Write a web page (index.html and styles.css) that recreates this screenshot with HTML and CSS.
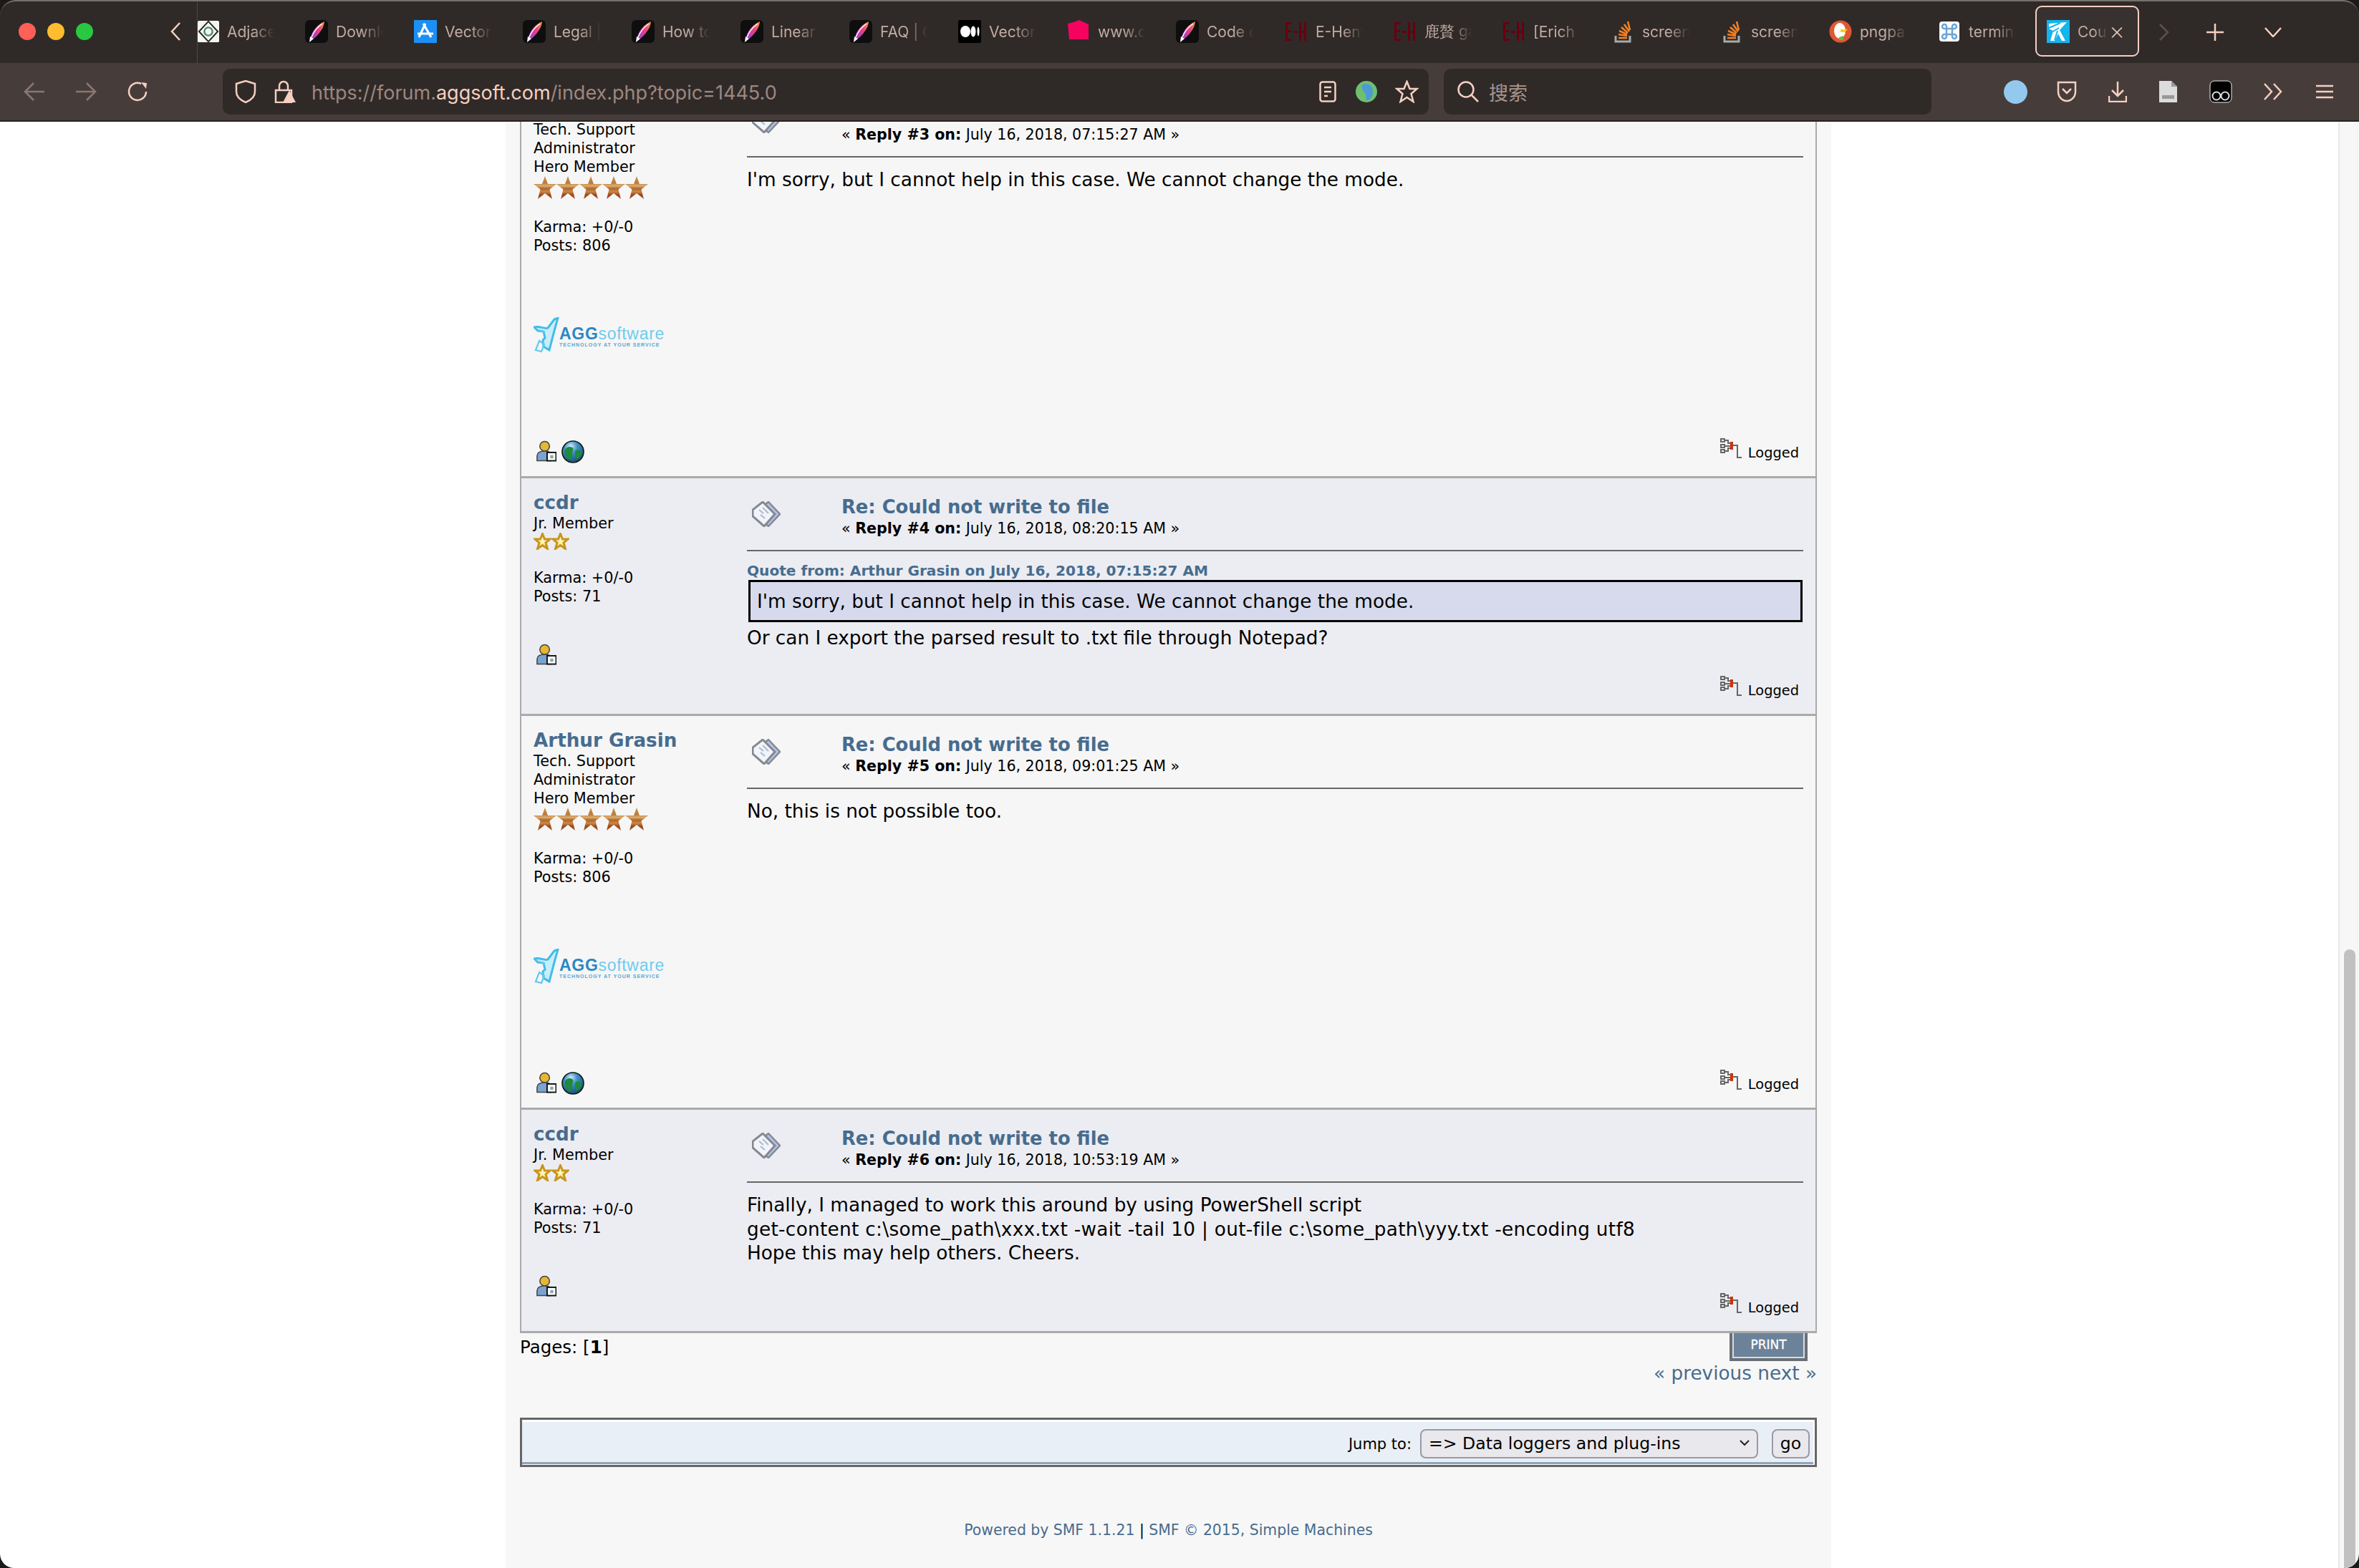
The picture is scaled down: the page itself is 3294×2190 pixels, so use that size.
FILE: index.html
```html
<!DOCTYPE html>
<html>
<head>
    <title>Could not write to file</title>
    <link rel="stylesheet" href="styles.css">
</head>
<body>

    <svg class="sprite" width="0" height="0" aria-hidden="true">
        <defs>
            <linearGradient id="bronze" x1="0" y1="0" x2="0" y2="1">
                <stop offset="0" stop-color="#bf9658"/>
                <stop offset="0.3" stop-color="#bd7a38"/>
                <stop offset="0.42" stop-color="#dcae72"/>
                <stop offset="0.55" stop-color="#b0662a"/>
                <stop offset="0.68" stop-color="#c9894a"/>
                <stop offset="0.82" stop-color="#9a4716"/>
                <stop offset="1" stop-color="#ad5432"/>
            </linearGradient>
            <linearGradient id="gold" x1="0" y1="0" x2="0" y2="1">
                <stop offset="0" stop-color="#fff8d0"/>
                <stop offset="0.6" stop-color="#fff3b0"/>
                <stop offset="1" stop-color="#f6d265"/>
            </linearGradient>
            <linearGradient id="quill" x1="1" y1="0" x2="0" y2="1">
                <stop offset="0" stop-color="#f0a13a"/>
                <stop offset="0.45" stop-color="#e8407e"/>
                <stop offset="1" stop-color="#9b3fe0"/>
            </linearGradient>
            <radialGradient id="earth" cx="0.4" cy="0.25" r="0.85">
                <stop offset="0" stop-color="#d7eef7"/>
                <stop offset="0.35" stop-color="#3f93c8"/>
                <stop offset="1" stop-color="#123f6a"/>
            </radialGradient>
            <symbol id="star-bronze" viewBox="0 0 32 32">
                <path d="M16 0l4 11h12l-9.500 7.500L26 32l-10-8-10 8 3.500-13.500L0 11h12z" fill="url(#bronze)"/>
            </symbol>
            <symbol id="star-gold" viewBox="0 0 24 24">
                <path d="M12 1.500l3 7.500h7.500l-6 5 2.500 8.500-7-5-7 5 2.500-8.500-6-5H9z" fill="url(#gold)" stroke="#c8951c" stroke-width="3"/>
            </symbol>
            <symbol id="post-icon" viewBox="0 0 40 36">
                <path d="M23 1l16 17-16 17-5-4 11-13-11-13z" fill="#b4c2ee" stroke="#85898f" stroke-width="2.500"/>
                <path d="M15 1l17 17-15 17L1 21V12z" fill="#f1f4fa" stroke="#85898f" stroke-width="3"/>
                <path d="M10 12l6 5M15 9l8 8M12 19l6 5" stroke="#aeb8c6" stroke-width="2"/>
            </symbol>
            <symbol id="profile-icon" viewBox="0 0 30 30">
                <circle cx="13" cy="8" r="7" fill="#e5b733" stroke="#444" stroke-width="1.600"/>
                <path d="M2 29v-7c0-5 4-7 11-7s9 2 9 7v7z" fill="#7aa3d0" stroke="#444" stroke-width="1.600"/>
                <rect x="16.500" y="17" width="13" height="12" fill="#fff" stroke="#111" stroke-width="2"/>
                <rect x="21" y="21" width="4.500" height="4.500" fill="#8aa"/>
            </symbol>
            <symbol id="globe-icon" viewBox="0 0 32 32">
                <circle cx="16" cy="16" r="15" fill="url(#earth)" stroke="#0c1a14" stroke-width="1.600"/>
                <path d="M5 13c3-5 9-5 11-2s-2 5-1 8-1 9-4 8-8-10-6-14zM20 14c3-1 8 0 8 3s-3 8-6 9-4-10-2-12z" fill="#1f8a3a"/>
            </symbol>
            <symbol id="logged-icon" viewBox="0 0 30 30">
                <g fill="none" stroke="#666" stroke-width="2">
                    <rect x="1" y="1" width="5" height="4"/>
                    <rect x="1" y="9" width="5" height="4"/>
                    <rect x="1" y="16" width="5" height="4"/>
                    <path d="M6 3h5v4h4M6 11h9M6 18h5v-4h4M17 10h7v17h6"/>
                </g>
                <rect x="14" y="5" width="4" height="11" fill="#cc3311"/>
            </symbol>
            <symbol id="plane" viewBox="0 0 38 50">
                <path d="M1 14c8-2 15 3 19 1l9-12 5-2-5 18-7 27-8-5-1-9 3-3-2-9-8-1z" fill="#c8eefb" stroke="#42bdea" stroke-width="3"/>
                <path d="M8 33l7 5-4 10-8-2zM7 18l9 3" fill="none" stroke="#62c9ef" stroke-width="2.200"/>
            </symbol>
            <symbol id="fav-pen" viewBox="0 0 32 32">
                <rect width="32" height="32" rx="6" fill="#0e0e0e"/>
                <path d="M27 2C18 6 10 14 8 24l4 2C19 20 26 12 27 2z" fill="url(#quill)"/>
                <path d="M24 5C17 10 12 16 9 24" stroke="#fff" stroke-width="1.500" fill="none"/>
                <path d="M7 23l5 3-6 5z" fill="#fff"/>
            </symbol>
            <symbol id="fav-eh" viewBox="0 0 32 32">
                <path d="M1 3h9v3H4v8h5v3H4v9h6v3H1zM20 3h3v12h4V3h3v26h-3V18h-4v11h-3zM12 15h6v3h-6z" fill="#660011"/>
            </symbol>
            <symbol id="fav-so" viewBox="0 0 24 32">
                <path d="M2 22v8h20v-8" fill="none" stroke="#a7a9ac" stroke-width="3"/>
                <path d="M6 25h12M6 20l12 2M7 15l11 5M10 10l9 8M14 6l7 10M19 2l3 12" stroke="#f48024" stroke-width="2.600" fill="none"/>
            </symbol>
            <symbol id="fav-agg" viewBox="0 0 32 32">
                <rect width="32" height="32" fill="#14b4ee"/>
                <path d="M3 5l25-2-10 11 8 15h-5l-5-10-5 10H5l4-14-6-3z" fill="#fff"/>
                <path d="M3 11l16-7M11 28l4-13M7 17l10-6" stroke="#14b4ee" stroke-width="2"/>
            </symbol>
        </defs>
    </svg>

    <div class="window">
        <header class="chrome">
            <div class="tabbar">
                <div class="lights">
                    <span class="light red"></span>
                    <span class="light yellow"></span>
                    <span class="light green"></span>
                </div>
                <svg class="tab-scroll" width="16" height="26" viewBox="0 0 16 26"><path d="M14 1L3 13l11 12" class="stroke"/></svg>
                <div class="tabs">
                    <div class="tab">
                        <svg class="fav" viewBox="0 0 32 32"><rect width="32" height="32" rx="2" fill="#f4f4f4"/><path d="M16 1l14 15-14 15L2 16z" fill="none" stroke="#222" stroke-width="2"/><circle cx="16" cy="16" r="6" fill="none" stroke="#4a8a5a" stroke-width="2.500"/></svg>
                        <span class="tab-title">Adjacency</span>
                    </div>
                    <div class="tab"><svg class="fav"><use href="#fav-pen"/></svg><span class="tab-title">Download</span></div>
                    <div class="tab">
                        <svg class="fav" viewBox="0 0 32 32"><rect width="32" height="32" fill="#1c8ff5"/><path d="M16 5L7 24M13 5l11 19M5 19h22" stroke="#fff" stroke-width="3" fill="none"/></svg>
                        <span class="tab-title">Vector</span>
                    </div>
                    <div class="tab"><svg class="fav"><use href="#fav-pen"/></svg><span class="tab-title">Legal | Affinity</span></div>
                    <div class="tab"><svg class="fav"><use href="#fav-pen"/></svg><span class="tab-title">How to use</span></div>
                    <div class="tab"><svg class="fav"><use href="#fav-pen"/></svg><span class="tab-title">Linear</span></div>
                    <div class="tab"><svg class="fav"><use href="#fav-pen"/></svg><span class="tab-title">FAQ | Code</span></div>
                    <div class="tab">
                        <svg class="fav" viewBox="0 0 32 32"><rect width="32" height="32" rx="2" fill="#000"/><ellipse cx="10" cy="16" rx="7" ry="8" fill="#fff"/><ellipse cx="21" cy="16" rx="3.500" ry="7.500" fill="#fff"/><ellipse cx="28" cy="16" rx="1.500" ry="6.500" fill="#fff"/></svg>
                        <span class="tab-title">Vector</span>
                    </div>
                    <div class="tab">
                        <svg class="fav" viewBox="0 0 32 32"><path d="M1 5l8-2 8-3 13 6v21L3 27z" fill="#f5035f"/></svg>
                        <span class="tab-title">www.dribbble</span>
                    </div>
                    <div class="tab"><svg class="fav"><use href="#fav-pen"/></svg><span class="tab-title">Code of</span></div>
                    <div class="tab"><svg class="fav"><use href="#fav-eh"/></svg><span class="tab-title">E-Hentai</span></div>
                    <div class="tab"><svg class="fav"><use href="#fav-eh"/></svg><span class="tab-title">鹿贅 gallery</span></div>
                    <div class="tab"><svg class="fav"><use href="#fav-eh"/></svg><span class="tab-title">[Erich Kästner</span></div>
                    <div class="tab"><svg class="fav"><use href="#fav-so"/></svg><span class="tab-title">screen</span></div>
                    <div class="tab"><svg class="fav"><use href="#fav-so"/></svg><span class="tab-title">screen</span></div>
                    <div class="tab">
                        <svg class="fav" viewBox="0 0 32 32"><circle cx="16" cy="16" r="15.500" fill="#de5833"/><ellipse cx="15" cy="15" rx="8" ry="11" fill="#fff"/><path d="M16 13h10l-4 4h-6z" fill="#fdd20a"/><path d="M14 24l6-2v6h-6z" fill="#65bc46"/></svg>
                        <span class="tab-title">pngpaste</span>
                    </div>
                    <div class="tab">
                        <svg class="fav" viewBox="0 0 32 32"><rect x="2" y="2" width="28" height="28" rx="4" fill="#fff"/><path d="M12 12h8v8h-8zM12 12V9a3 3 0 1 0-3 3zM20 12V9a3 3 0 1 1 3 3zM12 20v3a3 3 0 1 1-3-3zM20 20v3a3 3 0 1 0 3-3z" fill="none" stroke="#6aa5d8" stroke-width="2.500"/></svg>
                        <span class="tab-title">terminal</span>
                    </div>
                    <div class="tab active"><svg class="fav"><use href="#fav-agg"/></svg><span class="tab-title">Could</span><span class="tab-close">×</span></div>
                </div>
                <div class="tab-tools">
                    <svg width="14" height="24" viewBox="0 0 14 24"><path d="M1 1l11 11L1 23" stroke="#5a4f4b" class="plain"/></svg>
                    <svg width="24" height="24" viewBox="0 0 24 24"><path d="M12 0v24M0 12h24" class="stroke"/></svg>
                    <svg width="24" height="14" viewBox="0 0 24 14"><path d="M1 1l11 12L23 1" class="stroke"/></svg>
                </div>
            </div>
            <div class="toolbar">
                <div class="nav">
                    <svg width="30" height="26" viewBox="0 0 30 26"><path d="M14 1L2 13l12 12M2 13h27" class="stroke dim"/></svg>
                    <svg width="30" height="26" viewBox="0 0 30 26"><path d="M16 1l12 12-12 12M28 13H1" class="stroke dim"/></svg>
                    <svg width="30" height="28" viewBox="0 0 30 28"><path d="M27 14A12 12 0 1 1 20 3" class="stroke"/><path d="M20 1l8 1-1 8z" fill="#f5cfc0"/></svg>
                </div>
                <div class="urlbar">
                    <svg width="30" height="32" viewBox="0 0 30 32"><path d="M15 1l13 4v11c0 8-6 12-13 15C8 28 2 24 2 16V5z" class="stroke"/></svg>
                    <svg width="31" height="32" viewBox="0 0 31 32"><path d="M8 14V8a6 6 0 0 1 12 0v6M3 14h22v17H3z" class="stroke"/><path d="M22 14l9 17H13z" fill="#f5cfc0"/></svg>
                    <span class="url">https://forum.<b>aggsoft.com</b>/index.php?topic=1445.0</span>
                    <div class="url-tools">
                        <svg width="24" height="30" viewBox="0 0 24 30"><rect x="1.500" y="1.500" width="21" height="27" rx="3" class="stroke"/><path d="M7 9h10M7 15h10M7 21h5" class="stroke"/></svg>
                        <svg width="30" height="32" viewBox="0 0 30 32"><circle cx="15" cy="16" r="15" fill="#6fbf6f"/><path d="M10 6c8-3 14 2 14 10s-5 12-8 12 0-7-3-10-6-9-3-12z" fill="#4d9ad6"/></svg>
                        <svg width="33" height="32" viewBox="0 0 33 32"><path d="M16.500 2l4 10h10l-8 7 3 11-9-6-9 6 3-11-8-7h10z" class="stroke"/></svg>
                    </div>
                </div>
                <div class="searchbar">
                    <svg width="30" height="30" viewBox="0 0 30 30"><circle cx="12" cy="12" r="10.500" class="stroke"/><path d="M20 20l9 9" class="stroke"/></svg>
                    <span class="search-text">搜索</span>
                </div>
                <div class="tools">
                    <span class="blue-dot"></span>
                    <svg width="28" height="30" viewBox="0 0 28 30"><path d="M2 2h24v13a12 13 0 0 1-24 0z" class="stroke"/><path d="M8 11l6 6 6-6" class="stroke"/></svg>
                    <svg width="26" height="30" viewBox="0 0 26 30"><path d="M13 1v19M5 13l8 8 8-8M1 21v8h24v-8" class="stroke"/></svg>
                    <svg width="27" height="32" viewBox="0 0 27 32"><path d="M1 1h17l8 8v22H1z" fill="#dcdcdc"/><path d="M18 1v8h8z" fill="#999"/><rect x="5" y="21" width="17" height="5" fill="#999"/></svg>
                    <svg width="32" height="32" viewBox="0 0 32 32"><rect x="1" y="1" width="30" height="30" rx="6" fill="#000" stroke="#eee"/><circle cx="10" cy="22" r="5.500" fill="none" stroke="#ddd" stroke-width="2"/><circle cx="22" cy="22" r="5.500" fill="none" stroke="#ddd" stroke-width="2"/></svg>
                    <svg width="26" height="24" viewBox="0 0 26 24"><path d="M1 1l10 11L1 23M14 1l10 11-10 11" class="stroke"/></svg>
                    <svg width="24" height="20" viewBox="0 0 24 20"><path d="M0 2h24M0 10h24M0 18h24" class="stroke"/></svg>
                </div>
            </div>
        </header>

        <div class="viewport">
            <main class="forum">
                <div class="posts">

                    <article class="post odd first">
                        <div class="poster">
                            <div class="role">Tech. Support</div>
                            <div class="role">Administrator</div>
                            <div class="role">Hero Member</div>
                            <div class="stars"><svg class="star"><use href="#star-bronze"/></svg><svg class="star"><use href="#star-bronze"/></svg><svg class="star"><use href="#star-bronze"/></svg><svg class="star"><use href="#star-bronze"/></svg><svg class="star"><use href="#star-bronze"/></svg></div>
                            <div class="stats">Karma: +0/-0<br>Posts: 806</div>
                            <div class="logo"><svg class="plane"><use href="#plane"/></svg><div class="logo-text"><div class="logo-name"><b>AGG</b>software</div><div class="logo-tag">TECHNOLOGY AT YOUR SERVICE</div></div></div>
                            <div class="links admin"><svg class="profile"><use href="#profile-icon"/></svg><svg class="globe"><use href="#globe-icon"/></svg></div>
                        </div>
                        <div class="content">
                            <div class="head">
                                <svg class="post-icon"><use href="#post-icon"/></svg>
                                <div class="meta">
                                    <h3 class="subject">Re: Could not write to file</h3>
                                    <div class="when">« <b>Reply #3 on:</b> July 16, 2018, 07:15:27 AM »</div>
                                </div>
                            </div>
                            <div class="body">I'm sorry, but I cannot help in this case. We cannot change the mode.</div>
                            <div class="logged"><svg class="logged-icon"><use href="#logged-icon"/></svg>Logged</div>
                        </div>
                    </article>

                    <article class="post even short">
                        <div class="poster">
                            <div class="name">ccdr</div>
                            <div class="role">Jr. Member</div>
                            <div class="stars small"><svg class="star"><use href="#star-gold"/></svg><svg class="star"><use href="#star-gold"/></svg></div>
                            <div class="stats">Karma: +0/-0<br>Posts: 71</div>
                            <div class="links member"><svg class="profile"><use href="#profile-icon"/></svg></div>
                        </div>
                        <div class="content">
                            <div class="head">
                                <svg class="post-icon"><use href="#post-icon"/></svg>
                                <div class="meta">
                                    <h3 class="subject">Re: Could not write to file</h3>
                                    <div class="when">« <b>Reply #4 on:</b> July 16, 2018, 08:20:15 AM »</div>
                                </div>
                            </div>
                            <div class="quote-head">Quote from: Arthur Grasin on July 16, 2018, 07:15:27 AM</div>
                            <div class="quote">I'm sorry, but I cannot help in this case. We cannot change the mode.</div>
                            <div class="body after-quote">Or can I export the parsed result to .txt file through Notepad?</div>
                            <div class="logged"><svg class="logged-icon"><use href="#logged-icon"/></svg>Logged</div>
                        </div>
                    </article>

                    <article class="post odd">
                        <div class="poster">
                            <div class="name">Arthur Grasin</div>
                            <div class="role">Tech. Support</div>
                            <div class="role">Administrator</div>
                            <div class="role">Hero Member</div>
                            <div class="stars"><svg class="star"><use href="#star-bronze"/></svg><svg class="star"><use href="#star-bronze"/></svg><svg class="star"><use href="#star-bronze"/></svg><svg class="star"><use href="#star-bronze"/></svg><svg class="star"><use href="#star-bronze"/></svg></div>
                            <div class="stats">Karma: +0/-0<br>Posts: 806</div>
                            <div class="logo"><svg class="plane"><use href="#plane"/></svg><div class="logo-text"><div class="logo-name"><b>AGG</b>software</div><div class="logo-tag">TECHNOLOGY AT YOUR SERVICE</div></div></div>
                            <div class="links admin"><svg class="profile"><use href="#profile-icon"/></svg><svg class="globe"><use href="#globe-icon"/></svg></div>
                        </div>
                        <div class="content">
                            <div class="head">
                                <svg class="post-icon"><use href="#post-icon"/></svg>
                                <div class="meta">
                                    <h3 class="subject">Re: Could not write to file</h3>
                                    <div class="when">« <b>Reply #5 on:</b> July 16, 2018, 09:01:25 AM »</div>
                                </div>
                            </div>
                            <div class="body">No, this is not possible too.</div>
                            <div class="logged"><svg class="logged-icon"><use href="#logged-icon"/></svg>Logged</div>
                        </div>
                    </article>

                    <article class="post even last">
                        <div class="poster">
                            <div class="name">ccdr</div>
                            <div class="role">Jr. Member</div>
                            <div class="stars small"><svg class="star"><use href="#star-gold"/></svg><svg class="star"><use href="#star-gold"/></svg></div>
                            <div class="stats">Karma: +0/-0<br>Posts: 71</div>
                            <div class="links member"><svg class="profile"><use href="#profile-icon"/></svg></div>
                        </div>
                        <div class="content">
                            <div class="head">
                                <svg class="post-icon"><use href="#post-icon"/></svg>
                                <div class="meta">
                                    <h3 class="subject">Re: Could not write to file</h3>
                                    <div class="when">« <b>Reply #6 on:</b> July 16, 2018, 10:53:19 AM »</div>
                                </div>
                            </div>
                            <div class="body">Finally, I managed to work this around by using PowerShell script<br><span class="code-line">get-content c:\some_path\xxx.txt -wait -tail 10 | out-file c:\some_path\yyy.txt -encoding utf8</span><br>Hope this may help others. Cheers.</div>
                            <div class="logged"><svg class="logged-icon"><use href="#logged-icon"/></svg>Logged</div>
                        </div>
                    </article>

                </div>

                <div class="pager">
                    <div class="pages">Pages: [<b>1</b>]</div>
                    <div class="pager-right">
                        <a class="print">PRINT</a>
                        <div class="prevnext">« previous next »</div>
                    </div>
                </div>

                <div class="jump">
                    <span class="jump-label">Jump to:</span>
                    <div class="select-wrap">
                        <select class="jump-select"><option>=&gt; Data loggers and plug-ins</option></select>
                        <svg class="select-arrow" width="14" height="9" viewBox="0 0 14 9"><path d="M1 1l6 6 6-6" fill="none" stroke="#222" stroke-width="2"/></svg>
                    </div>
                    <button class="go">go</button>
                </div>

                <footer class="credits">Powered by SMF 1.1.21 <span class="pipe">|</span> SMF © 2015, Simple Machines</footer>
            </main>

            <div class="scrollbar"><div class="thumb"></div></div>
        </div>
    </div>

</body>
</html>
```

FILE: styles.css
```css
html, body {
    margin: 0;
    height: 100%;
    background: #1c1a19;
    overflow: hidden;
}
.sprite {
    position: absolute;
}
.window {
    height: 2190px;
    display: flex;
    flex-direction: column;
}

/* browser chrome */
.chrome {
    height: 170px;
    flex: none;
    background: #2f2a28;
    border-top: 2px solid #77716e;
    border-radius: 22px 22px 0 0;
    box-sizing: border-box;
    border-bottom: 2px solid #262120;
    font-family: Inter, "Liberation Sans", sans-serif;
    color: #c3aca2;
    overflow: hidden;
}
.stroke {
    fill: none;
    stroke: #f5cfc0;
    stroke-width: 2.5;
}
.stroke.dim {
    stroke: #8b7770;
}
.plain {
    fill: none;
    stroke-width: 2.5;
}
.tabbar {
    height: 86px;
    display: flex;
    align-items: center;
    position: relative;
}
.lights {
    display: flex;
    gap: 16px;
    margin-left: 26px;
    margin-top: -2px;
}
.light {
    width: 24px;
    height: 24px;
    border-radius: 50%;
}
.red { background: #ff5f57; }
.yellow { background: #febc2e; }
.green { background: #28c840; }
.tab-scroll {
    margin-left: 107px;
    margin-top: -2px;
    flex: none;
}
.tabs {
    display: flex;
    margin-left: 22px;
    height: 86px;
    border-left: 1px solid #4d4643;
    align-items: center;
    width: 2735px;
}
.tab {
    width: 152px;
    flex: none;
    display: flex;
    align-items: center;
    gap: 11px;
    position: relative;
    margin-top: -2px;
}
.tab:first-child {
    margin-left: -2px;
}
.fav {
    width: 32px;
    height: 32px;
    flex: none;
}
.tab:first-child .fav {
    margin-left: 2px;
    width: 30px;
}
.tab-title {
    font-size: 21px;
    width: 66px;
    white-space: nowrap;
    overflow: hidden;
    -webkit-mask-image: linear-gradient(to right, #000 55%, transparent 100%);
    mask-image: linear-gradient(to right, #000 55%, transparent 100%);
}
.tab.active::before {
    content: "";
    position: absolute;
    left: -16px;
    top: -20px;
    width: 141px;
    height: 67px;
    border: 2px solid #f5cfc0;
    border-radius: 9px;
    background: #373230;
}
.tab.active .fav,
.tab.active .tab-title {
    position: relative;
}
.tab.active .tab-title {
    width: 42px;
}
.tab-close {
    position: absolute;
    left: 87px;
    top: 0;
    font-size: 34px;
    line-height: 30px;
    font-weight: 200;
    color: #f5cfc0;
}
.tab-tools {
    position: absolute;
    left: 3015px;
    top: 31px;
    display: flex;
    align-items: center;
}
.tab-tools svg:nth-child(2) {
    margin: 0 57px 0 52px;
}
.toolbar {
    height: 80px;
    background: #463d3b;
    display: flex;
    align-items: center;
}
.nav {
    width: 311px;
    flex: none;
    display: flex;
    align-items: center;
    gap: 42px;
    padding-left: 33px;
    box-sizing: border-box;
}
.urlbar {
    width: 1684px;
    height: 64px;
    flex: none;
    background: #2f2a28;
    border-radius: 10px;
    display: flex;
    align-items: center;
    padding-left: 17px;
    box-sizing: border-box;
    gap: 24px;
}
.urlbar svg:nth-child(2) {
    margin-right: -2px;
}
.url {
    font-size: 27px;
    color: #9c8780;
    white-space: nowrap;
    padding-top: 3px;
}
.url b {
    font-weight: 400;
    color: #f5cfc0;
}
.url-tools {
    margin-left: auto;
    display: flex;
    align-items: center;
    gap: 27px;
    padding-right: 14px;
}
.searchbar {
    width: 681px;
    height: 64px;
    flex: none;
    margin-left: 21px;
    background: #2f2a28;
    border-radius: 10px;
    display: flex;
    align-items: center;
    gap: 14px;
    padding-left: 19px;
    box-sizing: border-box;
}
.search-text {
    font-family: "Noto Sans CJK SC", sans-serif;
    font-size: 27px;
    color: #a8948b;
}
.tools {
    display: flex;
    align-items: center;
    gap: 44px;
    margin-left: 101px;
}
.tools svg:last-child {
    margin-left: 3px;
}
.blue-dot {
    width: 33px;
    height: 33px;
    margin-right: -3px;
    border-radius: 50%;
    background: #93c9ee;
}

/* page */
.viewport {
    flex: 1;
    display: flex;
    background: #fff;
    overflow: hidden;
    border-radius: 0 0 20px 20px;
}
.forum {
    width: 1851px;
    margin-left: 706px;
    margin-right: 707px;
    flex: none;
    padding: 0 20px;
    box-sizing: border-box;
    background: #f7f7f7;
    font-family: "DejaVu Sans", sans-serif;
    color: #000;
}
.posts {
    border-left: 2px solid #aaa;
    border-right: 2px solid #aaa;
}
.post {
    height: 550px;
    box-sizing: border-box;
    border-bottom: 3px solid #aaa;
    display: flex;
    padding: 0 17px 0 17px;
}
.post.first {
    margin-top: -52px;
}
.post.short {
    height: 332px;
}
.post.last {
    height: 312px;
}
.odd {
    background: #f6f6f6;
}
.even {
    background: #ecedf2;
}
.poster {
    width: 298px;
    flex: none;
    padding-top: 50px;
    box-sizing: border-box;
    font-size: 20.8px;
}
.name {
    margin-top: -50px;
    height: 50px;
    line-height: 68px;
    font-size: 26.2px;
    font-weight: bold;
    color: #476c8e;
    white-space: nowrap;
}
.role {
    height: 26px;
    line-height: 27px;
}
.stars {
    display: flex;
    height: 32px;
    margin-bottom: 0;
}
.star {
    width: 32px;
    height: 32px;
}
.stars.small {
    height: 24px;
    margin: 0;
}
.stars.small .star {
    width: 25px;
    height: 24px;
}
.stats {
    margin-top: 26px;
    line-height: 26px;
}
.logo {
    display: flex;
    margin-top: 87px;
    height: 50px;
}
.plane {
    width: 38px;
    height: 50px;
    flex: none;
}
.logo-text {
    padding-top: 12px;
    white-space: nowrap;
    margin-left: -2px;
}
.logo-name {
    font-family: "Liberation Sans", sans-serif;
    font-size: 23px;
    line-height: 22px;
    letter-spacing: 0.7px;
    color: #6fcbef;
}
.logo-name b {
    color: #2c87c5;
}
.logo-tag {
    font-family: "Liberation Sans", sans-serif;
    font-size: 7px;
    line-height: 10px;
    letter-spacing: 1px;
    font-weight: bold;
    color: #5ba7cf;
}
.links {
    display: flex;
    gap: 7px;
    padding-left: 3px;
}
.links.admin {
    margin-top: 122px;
}
.links.member {
    margin-top: 53px;
}
.profile {
    width: 29px;
    height: 30px;
}
.globe {
    width: 32px;
    height: 32px;
}
.content {
    flex: 1;
    min-width: 0;
    display: flex;
    flex-direction: column;
}
.head {
    height: 102px;
    flex: none;
    box-sizing: border-box;
    border-bottom: 2px solid #666;
    display: flex;
}
.post-icon {
    width: 40px;
    height: 36px;
    margin: 32px 0 0 7px;
    flex: none;
}
.meta {
    margin-left: 85px;
    padding-top: 24px;
}
.subject {
    margin: 0;
    font-size: 25.8px;
    line-height: 32px;
    font-weight: bold;
    color: #476c8e;
    white-space: nowrap;
}
.when {
    font-size: 20.6px;
    line-height: 28px;
    white-space: nowrap;
}
.body {
    font-size: 26.3px;
    line-height: 33.5px;
    padding-top: 15px;
}
.code-line {
    letter-spacing: 0.3px;
}
.quote-head {
    font-size: 20.1px;
    font-weight: bold;
    line-height: 26px;
    color: #476c8e;
    margin-top: 14px;
}
.quote {
    margin: 0 1px 0 2px;
    height: 59px;
    box-sizing: border-box;
    border: 3px solid #000;
    background: #d7daec;
    font-size: 26.3px;
    line-height: 55px;
    padding-left: 9px;
    white-space: nowrap;
}
.body.after-quote {
    padding-top: 6px;
}
.logged {
    margin-top: auto;
    margin-bottom: 19px;
    align-self: flex-end;
    margin-right: 6px;
    display: flex;
    align-items: flex-end;
    gap: 9px;
    font-size: 19.4px;
    line-height: 26px;
}
.logged-icon {
    width: 30px;
    height: 30px;
    margin-bottom: 4px;
}

/* pager and jump box */
.pager {
    display: flex;
    justify-content: space-between;
    height: 118px;
}
.pages {
    font-size: 24.5px;
    line-height: 40px;
}
.pager-right {
    display: flex;
    flex-direction: column;
    align-items: flex-end;
}
.print {
    width: 109px;
    height: 39px;
    margin-right: 13px;
    box-sizing: border-box;
    background: #6b8299;
    border: solid #6b6f75;
    border-width: 0 4px 4px 4px;
    box-shadow: inset 2px -2px 0 #d5dde5, inset -2px 0 0 #d5dde5;
    color: #fff;
    font-size: 17px;
    line-height: 32px;
    text-align: center;
    -webkit-text-stroke: 0.3px #fff;
}
.prevnext {
    font-size: 26.3px;
    line-height: 34px;
    color: #476c8e;
    white-space: nowrap;
}
.jump {
    height: 69px;
    box-sizing: border-box;
    border: 3px solid #666;
    padding-top: 4px;
    background: #fff;
    background-clip: padding-box;
    display: flex;
    align-items: center;
    justify-content: flex-end;
    gap: 12px;
    padding-right: 7px;
    position: relative;
    font-size: 21px;
}
.jump::before {
    content: "";
    position: absolute;
    left: 0;
    right: 2px;
    top: 3px;
    bottom: 1px;
    background: #e9eff6;
    border-bottom: 3px solid #8fa5b8;
}
.jump-label,
.select-wrap,
.go {
    position: relative;
}
.select-wrap {
    margin-right: 7px;
    height: 41px;
    margin-top: -1px;
}
.jump-label {
    margin-top: 1px;
}
.jump-select {
    width: 472px;
    height: 41px;
    appearance: none;
    -webkit-appearance: none;
    border: 2px solid #9a9aa5;
    border-radius: 8px;
    background: #e9e8ec;
    font-family: "DejaVu Sans", sans-serif;
    font-size: 23.6px;
    padding: 0 10px;
    color: #000;
}
.select-arrow {
    position: absolute;
    right: 12px;
    top: 15px;
}
.go {
    width: 53px;
    height: 41px;
    margin-top: -1px;
    border: 2px solid #9a9aa5;
    border-radius: 8px;
    background: #e9e8ec;
    font-family: "DejaVu Sans", sans-serif;
    font-size: 23.6px;
    padding: 0;
    color: #000;
}
.credits {
    margin-top: 75px;
    text-align: center;
    font-size: 20.4px;
    line-height: 26px;
    color: #476c8e;
}
.pipe {
    color: #000;
}

/* scrollbar */
.scrollbar {
    width: 28px;
    flex: none;
    margin-left: 1px;
    box-sizing: border-box;
    background: #f7f7f7;
    border-left: 2px solid #e8e8e8;
    border-right: 1px solid #eee;
    padding: 1156px 4px 0 6px;
}
.thumb {
    height: 880px;
    width: 16px;
    background: #c1c1c1;
    border-radius: 8px;
}
```
